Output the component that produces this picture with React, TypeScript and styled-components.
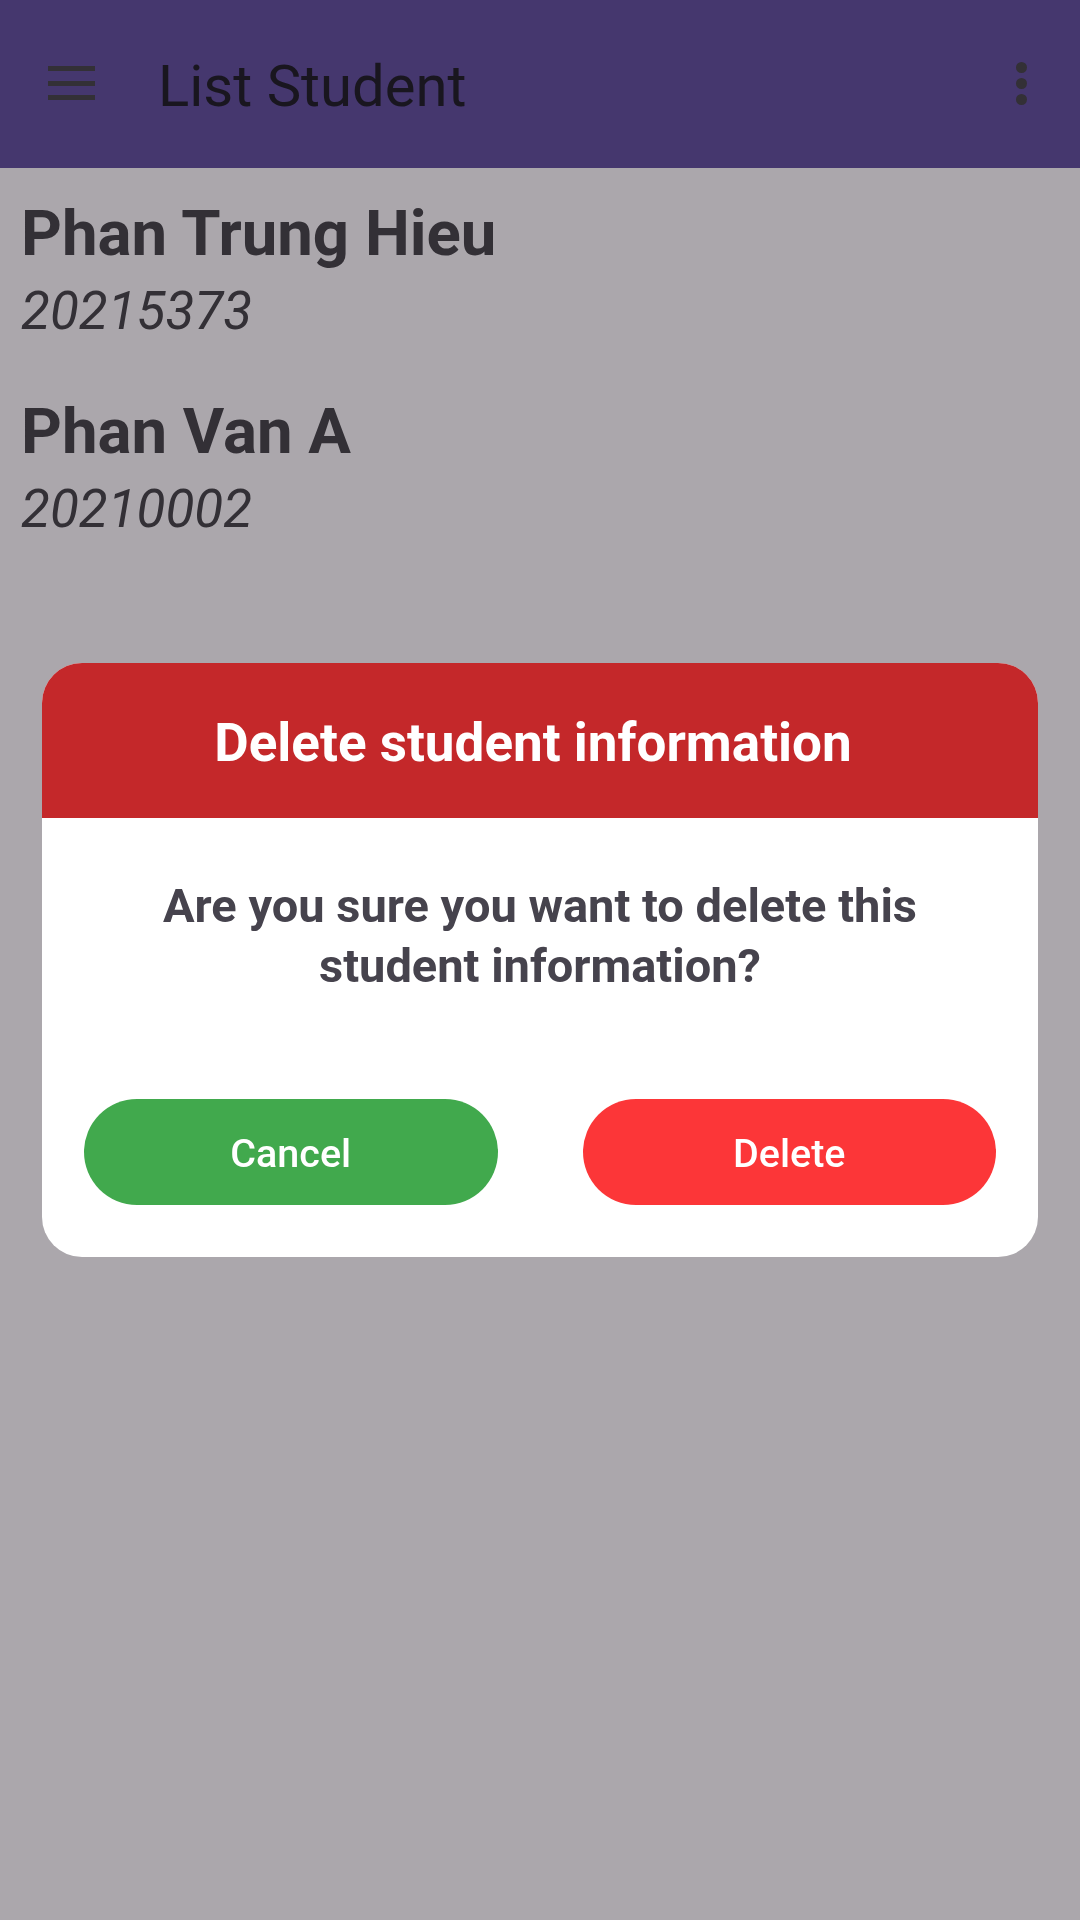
import React from "react";
import styled, { createGlobalStyle } from "styled-components";

const Global = createGlobalStyle`
  html, body {
    margin: 0;
    padding: 0;
    background: #aba7ac;
    font-family: Roboto, "Noto Sans", "Liberation Sans", sans-serif;
  }
  #root { min-height: 1920px; }
  * { box-sizing: border-box; }
`;

const Page = styled.div`
  width: 1080px;
  min-height: 1920px;
  background: #aba7ac;
  display: flex;
  flex-direction: column;
`;

const AppBar = styled.header`
  height: 168px;
  background: #45376e;
  display: flex;
  align-items: center;
  padding: 0 0 0 48px;
`;

const MenuIcon = styled.div`
  width: 47px;
  height: 34px;
  display: flex;
  flex-direction: column;
  justify-content: space-between;
  margin-top: -2px;
  span {
    display: block;
    height: 5px;
    background: #333036;
  }
`;

const Title = styled.h1`
  margin: 0 0 0 63px;
  font-size: 58px;
  font-weight: 400;
  color: #19161f;
  flex: 1;
  line-height: 1;
  padding-top: 4px;
`;

const MoreIcon = styled.div`
  width: 12px;
  margin-right: 52px;
  display: flex;
  flex-direction: column;
  gap: 5px;
  margin-top: -2px;
  span {
    width: 11px;
    height: 11px;
    border-radius: 50%;
    background: #333036;
  }
`;

const List = styled.main`
  padding: 24px 18px 0 21px;
  display: flex;
  flex-direction: column;
  gap: 44px;
`;

const Item = styled.div`
  display: flex;
  flex-direction: column;
`;

const Name = styled.div`
  font-size: 63.5px;
  font-weight: 700;
  line-height: 84px;
  color: #333036;
`;

const Code = styled.div`
  font-size: 53px;
  font-style: italic;
  font-weight: 400;
  line-height: 70px;
  color: #333036;
`;

const Layer = styled.div`
  position: fixed;
  inset: 0;
  display: flex;
  align-items: center;
  justify-content: center;
`;

const Dialog = styled.div`
  width: 996px;
  background: #ffffff;
  border-radius: 40px;
  overflow: hidden;
  display: flex;
  flex-direction: column;
`;

const DialogHeader = styled.div`
  height: 155px;
  background: #c4282a;
  display: flex;
  align-items: center;
  justify-content: center;
  padding: 5px 14px 0 0;
  color: #ffffff;
  font-size: 53px;
  font-weight: 700;
`;

const DialogBody = styled.div`
  padding: 58px 42px 52px;
  display: flex;
  flex-direction: column;
  gap: 103px;
`;

const Message = styled.p`
  margin: 0;
  text-align: center;
  font-size: 47px;
  line-height: 60px;
  font-weight: 700;
  color: #46434d;
`;

const Actions = styled.div`
  display: flex;
  justify-content: space-between;
  gap: 85px;
`;

const Button = styled.button<{ $bg: string }>`
  flex: 1;
  height: 106px;
  border: none;
  border-radius: 53px;
  background: ${(p) => p.$bg};
  color: #ffffff;
  font-family: Roboto, "Noto Sans", sans-serif;
  font-size: 39.5px;
  font-weight: 500;
  display: flex;
  align-items: center;
  justify-content: center;
  padding: 2px 0 0;
`;

const students = [
  { name: "Phan Trung Hieu", code: "20215373" },
  { name: "Phan Van A", code: "20210002" },
];

export default function App() {
  return (
    <>
      <Global />
      <Page>
        <AppBar>
          <MenuIcon>
            <span />
            <span />
            <span />
          </MenuIcon>
          <Title>List Student</Title>
          <MoreIcon>
            <span />
            <span />
            <span />
          </MoreIcon>
        </AppBar>
        <List>
          {students.map((s) => (
            <Item key={s.code}>
              <Name>{s.name}</Name>
              <Code>{s.code}</Code>
            </Item>
          ))}
        </List>
      </Page>
      <Layer>
        <Dialog>
          <DialogHeader>Delete student information</DialogHeader>
          <DialogBody>
            <Message>
              Are you sure you want to delete this
              <br />
              student information?
            </Message>
            <Actions>
              <Button $bg="#41a94d">Cancel</Button>
              <Button $bg="#fc3638">Delete</Button>
            </Actions>
          </DialogBody>
        </Dialog>
      </Layer>
    </>
  );
}
